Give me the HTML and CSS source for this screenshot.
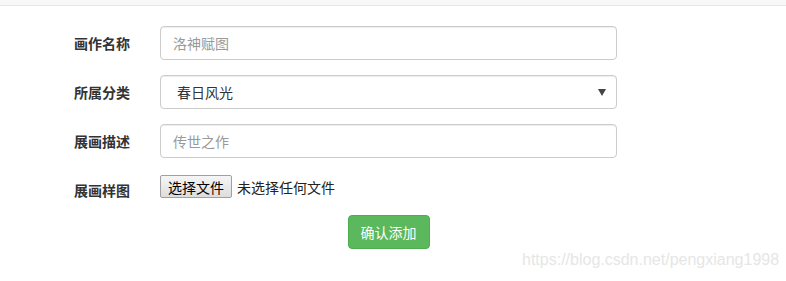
FILE: index.html
```html
<!DOCTYPE html>
<html lang="zh">
<head>
<meta charset="utf-8">
<link rel="stylesheet" href="styles.css">
</head>
<body>
<div class="topbar"></div>
<form class="form">
  <div class="row">
    <label class="label">画作名称</label>
    <div class="field"><input class="control" type="text" placeholder="洛神赋图"></div>
  </div>
  <div class="row">
    <label class="label">所属分类</label>
    <div class="field select-wrap">
      <select class="control select"><option>春日风光</option></select>
      <span class="caret"></span>
    </div>
  </div>
  <div class="row">
    <label class="label">展画描述</label>
    <div class="field"><input class="control" type="text" placeholder="传世之作"></div>
  </div>
  <div class="row row-file">
    <label class="label">展画样图</label>
    <div class="field file-field">
      <button type="button" class="file-btn">选择文件</button>
      <span class="file-text">未选择任何文件</span>
    </div>
  </div>
  <div class="row row-submit">
    <div></div>
    <div class="field submit-field"><button type="button" class="btn-success">确认添加</button></div>
  </div>
</form>
<div class="watermark">https://blog.csdn.net/pengxiang1998</div>
</body>
</html>
```
FILE: styles.css
```css
html, body {
  margin: 0;
  padding: 0;
  background: #fff;
  font-family: "Microsoft YaHei", "Noto Sans CJK SC", "Liberation Sans", sans-serif;
  font-size: 14px;
  color: #333;
}
.topbar {
  height: 5px;
  background: #f8f8f8;
  border-bottom: 1px solid #e7e7e7;
}
.form {
  padding-top: 20px;
  display: flex;
  flex-direction: column;
  gap: 15px;
}
.row {
  display: grid;
  grid-template-columns: 130px 457px;
  column-gap: 30px;
  align-items: start;
}
.label {
  text-align: right;
  font-weight: bold;
  line-height: 20px;
  padding-top: 7px;
  font-size: 14px;
}
.control {
  box-sizing: border-box;
  width: 457px;
  height: 34px;
  padding: 6px 12px;
  border: 1px solid #ccc;
  border-radius: 4px;
  font-family: inherit;
  font-size: 14px;
  color: #555;
  background: #fff;
  box-shadow: inset 0 1px 1px rgba(0,0,0,0.075);
  outline: none;
  margin: 0;
}
.control::placeholder {
  color: #999;
}
.select-wrap {
  position: relative;
}
.select {
  appearance: none;
  -webkit-appearance: none;
  padding-left: 16px;
  color: #333;
}
.caret {
  position: absolute;
  right: 11px;
  top: 14px;
  width: 0;
  height: 0;
  border-left: 4px solid transparent;
  border-right: 4px solid transparent;
  border-top: 7px solid #444;
}
.file-field {
  display: flex;
  align-items: center;
  padding-top: 2px;
  gap: 5px;
}
.file-btn {
  box-sizing: border-box;
  width: 72px;
  height: 23px;
  padding: 0;
  border: 1px solid #a0a0a0;
  border-radius: 2px;
  background: linear-gradient(#f6f6f6, #dddddd);
  font-family: inherit;
  font-size: 14px;
  color: #000;
  line-height: 20px;
  margin: 0;
}
.file-text {
  font-size: 14px;
  color: #222;
}
.submit-field {
  display: flex;
  justify-content: center;
}
.btn-success {
  box-sizing: border-box;
  height: 34px;
  padding: 6px 12px;
  border: 1px solid #4cae4c;
  border-radius: 4px;
  background: #5cb85c;
  color: #fff;
  font-family: inherit;
  font-size: 14px;
  line-height: 20px;
  margin: 0;
}
.watermark {
  position: absolute;
  left: 522px;
  top: 251px;
  font-family: "Liberation Sans", Arial, sans-serif;
  font-size: 16px;
  color: #e6e6e6;
}
```
